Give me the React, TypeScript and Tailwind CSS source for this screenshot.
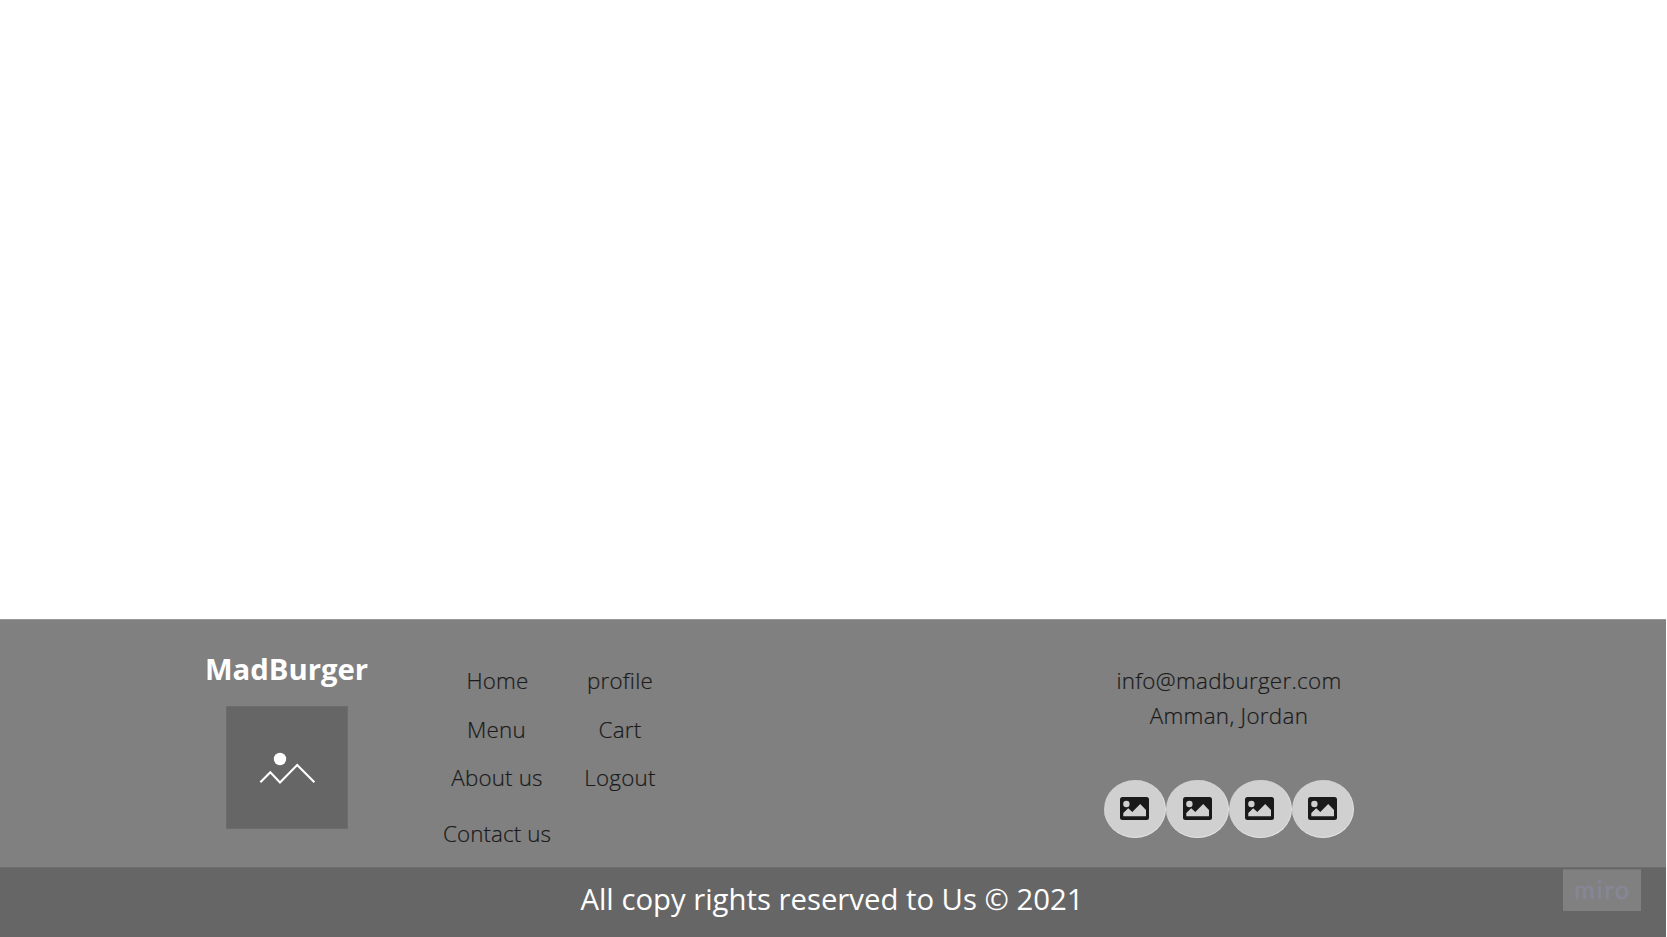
const mainLinks = [
  { label: 'Home', box: 'h-[49px] pl-[1px] tracking-[0.2px]' },
  { label: 'Menu', box: 'h-[48px] pr-[1px] tracking-[0.2px]' },
  { label: 'About us', box: 'h-[48px] tracking-[0.15px]' },
  { label: 'Contact us', box: 'mt-[8px] h-[48px] tracking-[0.1px]' },
];

const accountLinks = [
  { label: 'profile', box: 'h-[49px] tracking-[0.25px]' },
  { label: 'Cart', box: 'h-[48px] tracking-[0.2px]' },
  { label: 'Logout', box: 'h-[48px] tracking-[0.2px]' },
];

function LinkColumn({ links, className }: { links: { label: string; box: string }[]; className: string }) {
  return (
    <ul className={`flex flex-col items-center whitespace-nowrap text-[22.4px] font-light leading-[48px] [-webkit-text-stroke:0.2px_#1a1a1a] ${className}`}>
      {links.map((link) => (
        <li key={link.label} className={link.box}>
          <a href="#">{link.label}</a>
        </li>
      ))}
    </ul>
  );
}

function LogoPlaceholder() {
  return (
    <div className="mt-[12px] h-[123px] w-[122px] border border-[#6c6c6c] bg-[#666666]">
      <svg viewBox="0 0 120 121" className="h-full w-full" fill="none">
        <circle cx="53" cy="52" r="6.2" fill="#fff" />
        <path d="M33.4 75.2 43.3 65.2 53 75.4 70.2 58 87.4 75.2" stroke="#fff" strokeWidth="2.1" />
      </svg>
    </div>
  );
}

function SocialBadge() {
  return (
    <a href="#" className="flex h-[58.5px] w-[62.6px] items-center justify-center rounded-[50%] border-b border-r border-[#e2e2e2] bg-[#d0d0d0]">
      <svg viewBox="0 0 29 23" className="h-[23px] w-[29px]">
        <rect width="29" height="23" rx="2.5" fill="#1a1a1a" />
        <circle cx="6.4" cy="7" r="3.2" fill="#d0d0d0" />
        <path d="M3.3 19.2V16l4.9-4.7 4.1 3.8 7.9-8 5.8 5.8v6.3z" fill="#d0d0d0" />
      </svg>
    </a>
  );
}

export default function App() {
  return (
    <div className="flex h-[937px] w-[1667px] flex-col overflow-hidden bg-white pr-px font-['Open_Sans',sans-serif] text-[#1a1a1a]">
      <main className="h-[619px] shrink-0" />
      <footer className="flex flex-1 flex-col">
        <div className="flex h-[248px] border-t border-[#999999] bg-[#808080]">
          <div className="ml-[205px] mt-[24px] flex w-[163px] flex-col items-center">
            <h2 className="whitespace-nowrap text-[29.3px] font-bold leading-[50px] text-white">MadBurger</h2>
            <LogoPlaceholder />
          </div>
          <LinkColumn links={mainLinks} className="ml-[69px] mt-[37px] w-[120px]" />
          <LinkColumn links={accountLinks} className="ml-[13px] mt-[37px] w-[100px]" />
          <div className="ml-[434px] mt-[43px] flex w-[250px] flex-col items-center">
            <address className="whitespace-nowrap text-center text-[22.4px] font-light not-italic leading-[35px] tracking-[0.3px] [-webkit-text-stroke:0.2px_#1a1a1a]">
              info@madburger.com
              <br />
              Amman, Jordan
            </address>
            <div className="mt-[46.5px] flex">
              <SocialBadge />
              <SocialBadge />
              <SocialBadge />
              <SocialBadge />
            </div>
          </div>
        </div>
        <div className="flex flex-1 items-start border-t border-[#6e6e6e] bg-[#666666]">
          <p className="ml-[532px] w-[600px] whitespace-nowrap pt-[6px] text-center text-[29.3px] leading-[50px] text-white">
            All copy rights reserved to Us © 2021
          </p>
          <div className="ml-[431px] mt-[1px] flex h-[42px] w-[78px] items-center justify-center border-t border-[#767676] bg-[#808080] pb-[3px] pl-[1px] font-['Lato',sans-serif] text-[25px] font-normal leading-[41px] tracking-[1.8px] text-[#868696] [-webkit-text-stroke:0.7px_#868696]">
            miro
          </div>
        </div>
      </footer>
    </div>
  );
}
